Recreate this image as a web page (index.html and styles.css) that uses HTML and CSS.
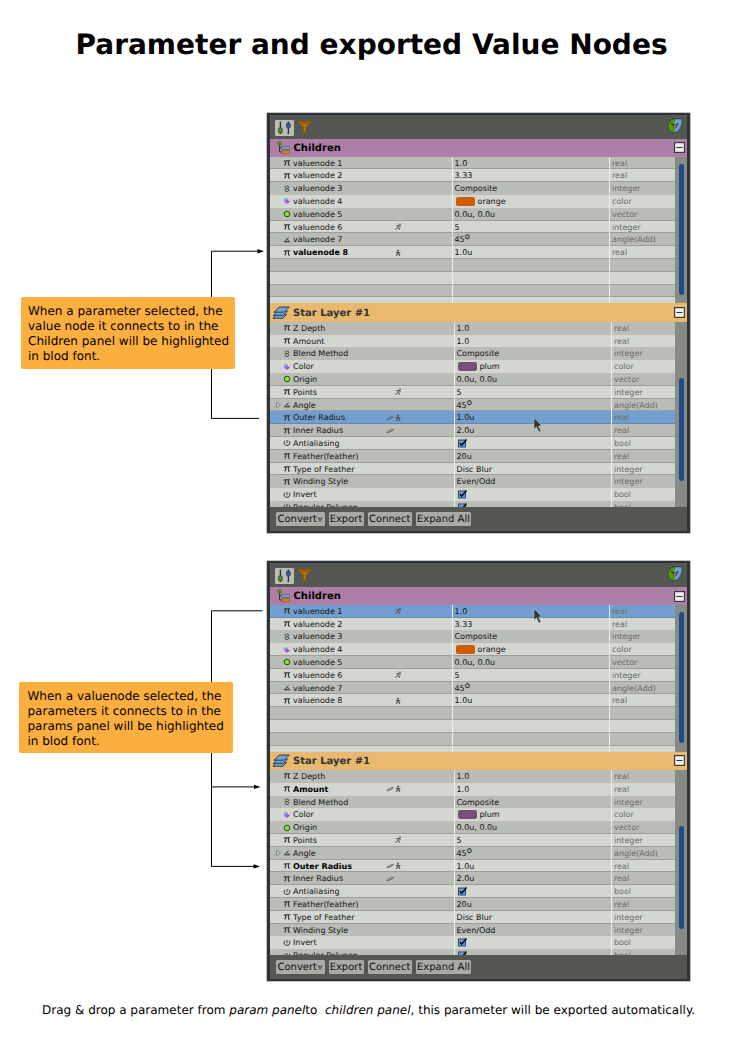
FILE: index.html
```html
<!DOCTYPE html>
<html lang="en">
<head>
<meta charset="utf-8">
<title>Parameter and exported Value Nodes</title>
<link rel="stylesheet" href="styles.css">
</head>
<body>
<svg class="defs" aria-hidden="true">
  <symbol id="pi" viewBox="0 0 8 8"><path d="M.9 2.6Q1.3 1.7 2.4 1.7H7.2M2.9 1.7Q2.9 4.9 1.7 6.4M5.4 1.7V5.2Q5.5 6.500 6.8 5.900" fill="none" stroke="#2e3436" stroke-width="1.15"/></symbol>
  <symbol id="int" viewBox="0 0 8 8"><path d="M5.8 1.2H3.2Q1.7 1.3 2 2.5Q2.3 3.7 4 3.7Q6 3.8 5.9 5.2Q5.7 6.6 4 6.6Q2.1 6.5 2.1 5.1Q2.3 3.8 4 3.7Q5.6 3.3 5.6 1.9" fill="none" stroke="#46535e" stroke-width="1"/><path d="M5 1.8h1.2v1.5H5z" fill="#3465a4"/></symbol>
  <symbol id="color" viewBox="0 0 8 8"><path d="M1.2 1.2L4.8 1.6V5.6L1.5 5.3z" fill="#58b9c9"/><path d="M3 2.4L7.3 4.5L3 6.9z" fill="#b23cf0"/><path d="M1.2 3.2L4 2.6L3 5.8L1.4 5.2z" fill="#9a7fd5"/></symbol>
  <symbol id="vec" viewBox="0 0 8 8"><circle cx="4" cy="4" r="2.8" fill="#8ae234" stroke="#2e4a1c" stroke-width="1"/></symbol>
  <symbol id="angle" viewBox="0 0 8 8"><path d="M5.6 1.5L1.3 5.8H7.2" fill="none" stroke="#2e3436" stroke-width="1"/><path d="M3.6 3.600Q5.800 3.2 6 5.4" fill="none" stroke="#3465a4" stroke-width="1"/></symbol>
  <symbol id="bool" viewBox="0 0 8 8"><path d="M2 1.7Q.9 2.6 1.1 4.1Q1.6 6.4 4 6.5Q6.4 6.4 6.9 4.1Q7 2.6 6 1.7M4 1V4.2" fill="none" stroke="#2e3436" stroke-width=".95"/></symbol>
  <symbol id="run" viewBox="0 0 8 8"><circle cx="6" cy="1.4" r=".9" fill="#555753"/><path d="M2 2.8L4.8 2.5L6.8 3.8M5 2.5L3.8 4.3L5.4 5.1L5.2 6.8M3.8 4.3L3 5.8L1.2 6.4" fill="none" stroke="#555753" stroke-width="1"/></symbol>
  <symbol id="man" viewBox="0 0 8 8"><circle cx="4" cy="1.5" r="1" fill="#555753"/><path d="M4 2.3V4.6M1.8 4.1L4 2.9L6.4 4.1M4 4.4L2.3 6.9M4 4.4L5.5 5.3V6.9" fill="none" stroke="#555753" stroke-width="1.1"/></symbol>
  <symbol id="link" viewBox="0 0 8 8"><path d="M.9 5.6L2.400 3.9H4.6L3.2 5.6zM4 4L5.2 2.4H7.3L5.8 4.200H4" fill="none" stroke="#666864" stroke-width=".95"/></symbol>
  <symbol id="check" viewBox="0 0 12 11"><rect x="1.5" y="2" width="7" height="7" fill="#729fcf" stroke="#204a87"/><path d="M3 5.1L4.7 7.2L9.5 1.6" fill="none" stroke="#111" stroke-width="1.6"/></symbol>
  <symbol id="tree" viewBox="0 0 14 14"><path d="M2.5 4V11H6M2.5 6.5H6" fill="none" stroke="#2e3436"/><circle cx="2.5" cy="2.6" r="1.8" fill="#4e9a06" stroke="#2e5a0c" stroke-width=".5"/><rect x="4.5" y="5.5" width="8" height="3" rx=".6" fill="#729fcf" stroke="#555753" stroke-width=".6"/><rect x="4.5" y="9.7" width="8" height="3" rx=".6" fill="#f57900" stroke="#555753" stroke-width=".6"/></symbol>
  <symbol id="layers" viewBox="0 0 18 13"><g fill="#729fcf" stroke="#1f3a50" stroke-width=".9"><path d="M.8 12.300L4.500 8.600H14.500L11 12.300z"/><path d="M1.300 9.400L5.500 5.200H15.500L11.500 9.400z"/><path d="M2 6.200L7.200 1H17.300L12 6.200z"/></g></symbol>
  <symbol id="sliders" viewBox="0 0 19 16"><rect width="19" height="16" rx="1" fill="#babdb6"/><path d="M5.4 1.5V14M13.4 1.5V14" stroke="#2e3436" stroke-width="1.4"/><rect x="3.5" y="8" width="3.8" height="5" rx="1.4" fill="#4e9a06" stroke="#2e3436" stroke-width=".8"/><rect x="11.5" y="3" width="3.8" height="5" rx="1.4" fill="#3465a4" stroke="#2e3436" stroke-width=".8"/></symbol>
  <symbol id="funnel" viewBox="0 0 15 15"><path d="M1.2 1.5H13.8L9 7.2V11.5L6.2 13.6V7.2z" fill="#b77207" stroke="#8f5902" stroke-width="1"/><path d="M3.5 3.1H11.5" stroke="#75531b" stroke-width="1.1"/></symbol>
  <symbol id="shield" viewBox="0 0 16 16"><path d="M8 .8Q.8 1.400 .8 8Q1 14.500 8 15z" fill="#4e9a06"/><path d="M8 .9L15.2 .9Q15.7 11.5 8 15z" fill="#729fcf"/><path d="M8 .8Q.8 1.4 .8 8Q1 14.5 8 15Q15.7 11.5 15.2 .8z" fill="none" stroke="#2e3436" stroke-width=".8"/><path d="M4 5.2L8 8.2L11.5 5.5" fill="none" stroke="#2e3436" stroke-width="1.2"/><circle cx="8" cy="8.6" r="1.6" fill="#ad7fa8" stroke="#2e3436" stroke-width=".7"/></symbol>
  <symbol id="minus" viewBox="0 0 11 11"><rect x=".6" y=".6" width="9.8" height="9.8" fill="#eeeeec" stroke="#2e3436" stroke-width="1.1"/><path d="M2.4 5.5H8.6" stroke="#2e3436"/></symbol>
  <symbol id="arrow" viewBox="0 0 10 16"><path d="M1 .8V12.2L3.5 9.8L5.8 15L7.8 14L5.5 9.1L8.8 8.8z" fill="#2e3436" stroke="#d3d7cf" stroke-width=".5"/></symbol>
</svg>

<h1 class="title">Parameter and exported Value Nodes</h1>

<section class="scene">
  <svg class="wires" width="267" height="421" viewBox="0 0 267 421">
    <path d="M260 138.2H211.5V305.4H259"/>
    <path class="head" d="M264 138.2L257.5 136V140.4z"/>
  </svg>
  <p class="callout callout-a">When a parameter selected, the<br>value node it connects to in the<br>Children panel will be highlighted<br>in blod font.</p>
  <div class="panel">
    <div class="toolbar"><svg class="t-sliders"><use href="#sliders"/></svg><svg class="t-funnel"><use href="#funnel"/></svg><svg class="t-shield"><use href="#shield"/></svg></div>
    <div class="head-row children-head"><svg class="h-tree"><use href="#tree"/></svg><h2>Children</h2><svg class="h-minus"><use href="#minus"/></svg></div>
    <div class="body children">
      <div class="rows">
        <div class="row"><svg class="ic"><use href="#pi"/></svg><span class="name">valuenode 1</span><span class="val">1.0</span><span class="type">real</span></div>
        <div class="row"><svg class="ic"><use href="#pi"/></svg><span class="name">valuenode 2</span><span class="val">3.33</span><span class="type">real</span></div>
        <div class="row flat"><svg class="ic"><use href="#int"/></svg><span class="name">valuenode 3</span><span class="val">Composite</span><span class="type">integer</span></div>
        <div class="row flat"><svg class="ic"><use href="#color"/></svg><span class="name">valuenode 4</span><span class="val"><i class="swatch orange"></i>orange</span><span class="type">color</span></div>
        <div class="row"><svg class="ic"><use href="#vec"/></svg><span class="name">valuenode 5</span><span class="val">0.0u, 0.0u</span><span class="type">vector</span></div>
        <div class="row"><svg class="ic"><use href="#pi"/></svg><span class="name">valuenode 6</span><svg class="state"><use href="#run"/></svg><span class="val">5</span><span class="type">integer</span></div>
        <div class="row"><svg class="ic"><use href="#angle"/></svg><span class="name">valuenode 7</span><span class="val">45<span class="deg">o</span></span><span class="type">angle(Add)</span></div>
        <div class="row"><svg class="ic"><use href="#pi"/></svg><span class="name strong">valuenode 8</span><svg class="state"><use href="#man"/></svg><span class="val">1.0u</span><span class="type">real</span></div>
        <div class="row"><span class="val"></span><span class="type"></span></div>
        <div class="row"><span class="val"></span><span class="type"></span></div>
        <div class="row"><span class="val"></span><span class="type"></span></div>
        <div class="row"><span class="val"></span><span class="type"></span></div>
      </div>
      <div class="track"><div class="thumb"></div></div>
    </div>
    <div class="head-row layer-head"><svg class="h-layers"><use href="#layers"/></svg><h2>Star Layer #1</h2><svg class="h-minus"><use href="#minus"/></svg></div>
    <div class="body params">
      <div class="rows">
        <div class="row flat"><svg class="ic"><use href="#pi"/></svg><span class="name">Z Depth</span><span class="val">1.0</span><span class="type">real</span></div>
        <div class="row flat"><svg class="ic"><use href="#pi"/></svg><span class="name">Amount</span><span class="val">1.0</span><span class="type">real</span></div>
        <div class="row flat"><svg class="ic"><use href="#int"/></svg><span class="name">Blend Method</span><span class="val">Composite</span><span class="type">integer</span></div>
        <div class="row flat"><svg class="ic"><use href="#color"/></svg><span class="name">Color</span><span class="val"><i class="swatch plum"></i>plum</span><span class="type">color</span></div>
        <div class="row"><svg class="ic"><use href="#vec"/></svg><span class="name">Origin</span><span class="val">0.0u, 0.0u</span><span class="type">vector</span></div>
        <div class="row"><svg class="ic"><use href="#pi"/></svg><span class="name">Points</span><svg class="state"><use href="#run"/></svg><span class="val">5</span><span class="type">integer</span></div>
        <div class="row"><svg class="tri" viewBox="0 0 5 8"><path d="M.6 1.2L4.4 4L.6 6.8z"/></svg><svg class="ic"><use href="#angle"/></svg><span class="name">Angle</span><span class="val">45<span class="deg">o</span></span><span class="type">angle(Add)</span></div>
        <div class="row selected"><svg class="ic"><use href="#pi"/></svg><span class="name">Outer Radius</span><svg class="link"><use href="#link"/></svg><svg class="state"><use href="#man"/></svg><span class="val">1.0u</span><span class="type">real</span></div>
        <div class="row"><svg class="ic"><use href="#pi"/></svg><span class="name">Inner Radius</span><svg class="link"><use href="#link"/></svg><span class="val">2.0u</span><span class="type">real</span></div>
        <div class="row"><svg class="ic"><use href="#bool"/></svg><span class="name">Antialiasing</span><span class="val"><svg class="check"><use href="#check"/></svg></span><span class="type">bool</span></div>
        <div class="row"><svg class="ic"><use href="#pi"/></svg><span class="name">Feather(feather)</span><span class="val">20u</span><span class="type">real</span></div>
        <div class="row"><svg class="ic"><use href="#pi"/></svg><span class="name">Type of Feather</span><span class="val">Disc Blur</span><span class="type">integer</span></div>
        <div class="row flat"><svg class="ic"><use href="#pi"/></svg><span class="name">Winding Style</span><span class="val">Even/Odd</span><span class="type">integer</span></div>
        <div class="row flat"><svg class="ic"><use href="#bool"/></svg><span class="name">Invert</span><span class="val"><svg class="check"><use href="#check"/></svg></span><span class="type">bool</span></div>
        <div class="row flat"><svg class="ic"><use href="#bool"/></svg><span class="name">Regular Polygon</span><span class="val"><svg class="check"><use href="#check"/></svg></span><span class="type">bool</span></div>
      </div>
      <div class="track"><div class="thumb"></div></div>
    </div>
    <div class="footer"><span class="btn b1">Convert<svg class="caret" viewBox="0 0 6 6"><path d="M0 .5H6L3 5.5z"/></svg></span><span class="btn b2">Export</span><span class="btn b3">Connect</span><span class="btn b4">Expand All</span></div>
    <svg class="cursor cursor-a"><use href="#arrow"/></svg>
  </div>
</section>

<section class="scene scene-b">
  <svg class="wires" width="267" height="421" viewBox="0 0 267 421">
    <path d="M262.5 49.8H211.5V305.4H257M211.5 225.9H257"/>
    <path class="head" d="M260.5 225.9L254 223.7V228.1zM260 305.4L253.5 303.2V307.6z"/>
  </svg>
  <p class="callout callout-b">When a valuenode selected, the<br>parameters it connects to in the<br>params panel will be highlighted<br>in blod font.</p>
  <div class="panel">
    <div class="toolbar"><svg class="t-sliders"><use href="#sliders"/></svg><svg class="t-funnel"><use href="#funnel"/></svg><svg class="t-shield"><use href="#shield"/></svg></div>
    <div class="head-row children-head"><svg class="h-tree"><use href="#tree"/></svg><h2>Children</h2><svg class="h-minus"><use href="#minus"/></svg></div>
    <div class="body children">
      <div class="rows">
        <div class="row selected"><svg class="ic"><use href="#pi"/></svg><span class="name">valuenode 1</span><svg class="state"><use href="#run"/></svg><span class="val">1.0</span><span class="type">real</span></div>
        <div class="row flat"><svg class="ic"><use href="#pi"/></svg><span class="name">valuenode 2</span><span class="val">3.33</span><span class="type">real</span></div>
        <div class="row flat"><svg class="ic"><use href="#int"/></svg><span class="name">valuenode 3</span><span class="val">Composite</span><span class="type">integer</span></div>
        <div class="row"><svg class="ic"><use href="#color"/></svg><span class="name">valuenode 4</span><span class="val"><i class="swatch orange"></i>orange</span><span class="type">color</span></div>
        <div class="row"><svg class="ic"><use href="#vec"/></svg><span class="name">valuenode 5</span><span class="val">0.0u, 0.0u</span><span class="type">vector</span></div>
        <div class="row"><svg class="ic"><use href="#pi"/></svg><span class="name">valuenode 6</span><svg class="state"><use href="#run"/></svg><span class="val">5</span><span class="type">integer</span></div>
        <div class="row"><svg class="ic"><use href="#angle"/></svg><span class="name">valuenode 7</span><span class="val">45<span class="deg">o</span></span><span class="type">angle(Add)</span></div>
        <div class="row"><svg class="ic"><use href="#pi"/></svg><span class="name">valuenode 8</span><svg class="state"><use href="#man"/></svg><span class="val">1.0u</span><span class="type">real</span></div>
        <div class="row"><span class="val"></span><span class="type"></span></div>
        <div class="row"><span class="val"></span><span class="type"></span></div>
        <div class="row"><span class="val"></span><span class="type"></span></div>
        <div class="row"><span class="val"></span><span class="type"></span></div>
      </div>
      <div class="track"><div class="thumb"></div></div>
    </div>
    <div class="head-row layer-head"><svg class="h-layers"><use href="#layers"/></svg><h2>Star Layer #1</h2><svg class="h-minus"><use href="#minus"/></svg></div>
    <div class="body params">
      <div class="rows">
        <div class="row flat"><svg class="ic"><use href="#pi"/></svg><span class="name">Z Depth</span><span class="val">1.0</span><span class="type">real</span></div>
        <div class="row flat"><svg class="ic"><use href="#pi"/></svg><span class="name strong">Amount</span><svg class="link"><use href="#link"/></svg><svg class="state"><use href="#man"/></svg><span class="val">1.0</span><span class="type">real</span></div>
        <div class="row flat"><svg class="ic"><use href="#int"/></svg><span class="name">Blend Method</span><span class="val">Composite</span><span class="type">integer</span></div>
        <div class="row flat"><svg class="ic"><use href="#color"/></svg><span class="name">Color</span><span class="val"><i class="swatch plum"></i>plum</span><span class="type">color</span></div>
        <div class="row"><svg class="ic"><use href="#vec"/></svg><span class="name">Origin</span><span class="val">0.0u, 0.0u</span><span class="type">vector</span></div>
        <div class="row"><svg class="ic"><use href="#pi"/></svg><span class="name">Points</span><svg class="state"><use href="#run"/></svg><span class="val">5</span><span class="type">integer</span></div>
        <div class="row"><svg class="tri" viewBox="0 0 5 8"><path d="M.6 1.2L4.4 4L.6 6.8z"/></svg><svg class="ic"><use href="#angle"/></svg><span class="name">Angle</span><span class="val">45<span class="deg">o</span></span><span class="type">angle(Add)</span></div>
        <div class="row"><svg class="ic"><use href="#pi"/></svg><span class="name strong">Outer Radius</span><svg class="link"><use href="#link"/></svg><svg class="state"><use href="#man"/></svg><span class="val">1.0u</span><span class="type">real</span></div>
        <div class="row"><svg class="ic"><use href="#pi"/></svg><span class="name">Inner Radius</span><svg class="link"><use href="#link"/></svg><span class="val">2.0u</span><span class="type">real</span></div>
        <div class="row"><svg class="ic"><use href="#bool"/></svg><span class="name">Antialiasing</span><span class="val"><svg class="check"><use href="#check"/></svg></span><span class="type">bool</span></div>
        <div class="row"><svg class="ic"><use href="#pi"/></svg><span class="name">Feather(feather)</span><span class="val">20u</span><span class="type">real</span></div>
        <div class="row"><svg class="ic"><use href="#pi"/></svg><span class="name">Type of Feather</span><span class="val">Disc Blur</span><span class="type">integer</span></div>
        <div class="row flat"><svg class="ic"><use href="#pi"/></svg><span class="name">Winding Style</span><span class="val">Even/Odd</span><span class="type">integer</span></div>
        <div class="row flat"><svg class="ic"><use href="#bool"/></svg><span class="name">Invert</span><span class="val"><svg class="check"><use href="#check"/></svg></span><span class="type">bool</span></div>
        <div class="row flat"><svg class="ic"><use href="#bool"/></svg><span class="name">Regular Polygon</span><span class="val"><svg class="check"><use href="#check"/></svg></span><span class="type">bool</span></div>
      </div>
      <div class="track"><div class="thumb"></div></div>
    </div>
    <div class="footer"><span class="btn b1">Convert<svg class="caret" viewBox="0 0 6 6"><path d="M0 .5H6L3 5.5z"/></svg></span><span class="btn b2">Export</span><span class="btn b3">Connect</span><span class="btn b4">Expand All</span></div>
    <svg class="cursor cursor-b"><use href="#arrow"/></svg>
  </div>
</section>

<p class="caption">Drag &amp; drop a parameter from <em>param panel</em>to&nbsp; <em>children panel</em>, this parameter will be exported automatically.</p>
</body>
</html>
```
FILE: styles.css
```css
* { box-sizing: border-box; }
body { margin: 0; width: 744px; height: 1052px; overflow: hidden; background: #fff; color: #000; font-family: "DejaVu Sans", Verdana, sans-serif; text-rendering: geometricPrecision; }
svg { display: block; }
.defs { position: absolute; width: 0; height: 0; }
.title { margin: 0; height: 113px; padding: 28px 0 0 75.5px; font-size: 28px; line-height: 34px; white-space: nowrap; }

.scene { display: grid; grid-template-columns: 267px 422.5px; height: 448.3px; align-items: start; }
.scene-b { height: 437px; }
.wires { grid-area: 1 / 1; }
.wires path { fill: none; stroke: #000; stroke-width: 1; }
.wires .head { fill: #000; stroke: none; }
.callout { grid-area: 1 / 1; width: 214px; height: 71.5px; margin: 0; padding: 7px 0 0 7px; border-radius: 2px; background: #fcaf3e; font-size: 12px; line-height: 15px; white-space: nowrap; }
.callout-a { margin: 184px 0 0 21px; }
.callout-b { margin: 120.5px 0 0 18.5px; padding-left: 9px; }

.panel { position: relative; grid-area: 1 / 2; height: 420px; border: solid #2e3436; border-width: 2px 3px; background: #555753; box-shadow: 0 0 0 .7px #aaa; }
.toolbar { display: flex; height: 24px; padding: 5px 4px 0 5px; }
.t-sliders { width: 19px; height: 16px; }
.t-funnel { width: 15px; height: 15px; margin-left: 3px; }
.t-shield { width: 16px; height: 16px; margin: -2.5px 0 0 auto; }
.head-row { display: flex; align-items: center; padding-right: 1.5px; }
.head-row h2 { flex: 1; margin: 0; padding-top: 1px; font-size: 10px; line-height: 17px; }
.children-head { height: 17.6px; background: #ad7fa8; }
.layer-head { height: 18.3px; background: #e9b96e; color: #2e3436; }
.h-tree { width: 14px; height: 14px; margin: 0 2.5px 0 7px; }
.h-layers { width: 18px; height: 13px; margin: 0 3px 0 2px; }
.h-minus { width: 11px; height: 11px; }

.body { display: flex; overflow: hidden; }
.children { height: 146.9px; }
.params { height: 185.3px; }
.rows { width: 405px; }
.row { display: grid; grid-template-columns: 13px 10px 93px 8px 58px 157px 1fr; grid-template-rows: 12.8px; height: 12.8px; align-items: center; background: #babdb6; color: #111; font-size: 8px; line-height: 12px; white-space: nowrap; box-shadow: inset 0 -1px #9c9f99; }
.params .row { grid-template-columns: 13px 10px 93px 8px 60px 157px 1fr; }
.row:nth-child(even) { background: #d3d7cf; }
.row.flat { box-shadow: none; }
.rows .row.selected { background: #729fcf; box-shadow: inset 0 -1px #6588b0; }
.tri { grid-area: 1 / 1; width: 5px; height: 8px; margin-left: 6px; fill: #d3d7cf; stroke: #666; stroke-width: .7; }
.ic { grid-area: 1 / 2; width: 8px; height: 8px; }
.name { grid-area: 1 / 3; padding-top: 1.2px; }
.strong { color: #000; font-weight: bold; }
.link { grid-area: 1 / 4; width: 8px; height: 8px; }
.state { grid-area: 1 / 5; width: 8px; height: 8px; }
.val, .type { display: flex; align-items: center; height: 12.8px; padding: 1.2px 0 0 1.5px; border-left: 1px solid #eeeeec; }
.val { grid-area: 1 / 6; }
.type { grid-area: 1 / 7; padding-left: 2px; color: #696b67; }
.deg { margin-top: -6px; font-size: 8.5px; }
.swatch { width: 19px; height: 9px; margin: -1px 3px 0 1px; border-radius: 2px; }
.orange { background: #ce5c00; }
.plum { background: #75507b; }
.check { width: 12px; height: 11px; margin-top: -1px; }
.track { width: 11.5px; padding-left: 3.5px; background: #888a85; }
.thumb { width: 5.5px; border-radius: 3px; background: #204a87; }
.children .thumb { height: 131px; margin-top: 7px; }
.params .thumb { height: 103px; margin-top: 56px; }

.footer { display: flex; gap: 4px; padding: 5px 0 0 6px; }
.btn { display: flex; align-items: center; justify-content: center; height: 14px; padding-top: 1px; border-radius: 1.5px; background: #a9aba7; color: #111; font-size: 10px; line-height: 14px; white-space: nowrap; }
.b1 { width: 48.5px; }
.b2 { width: 35px; }
.b3 { width: 44.5px; }
.b4 { width: 55px; }
.caret { width: 6px; height: 6px; fill: #666; }
.cursor { position: absolute; width: 10px; height: 16px; left: 263px; }
.cursor-a { top: 301.5px; }
.cursor-b { top: 45px; }
.caption { margin: 0; padding: 5px 0 0 42px; font-size: 12px; line-height: 14px; white-space: nowrap; }
```
